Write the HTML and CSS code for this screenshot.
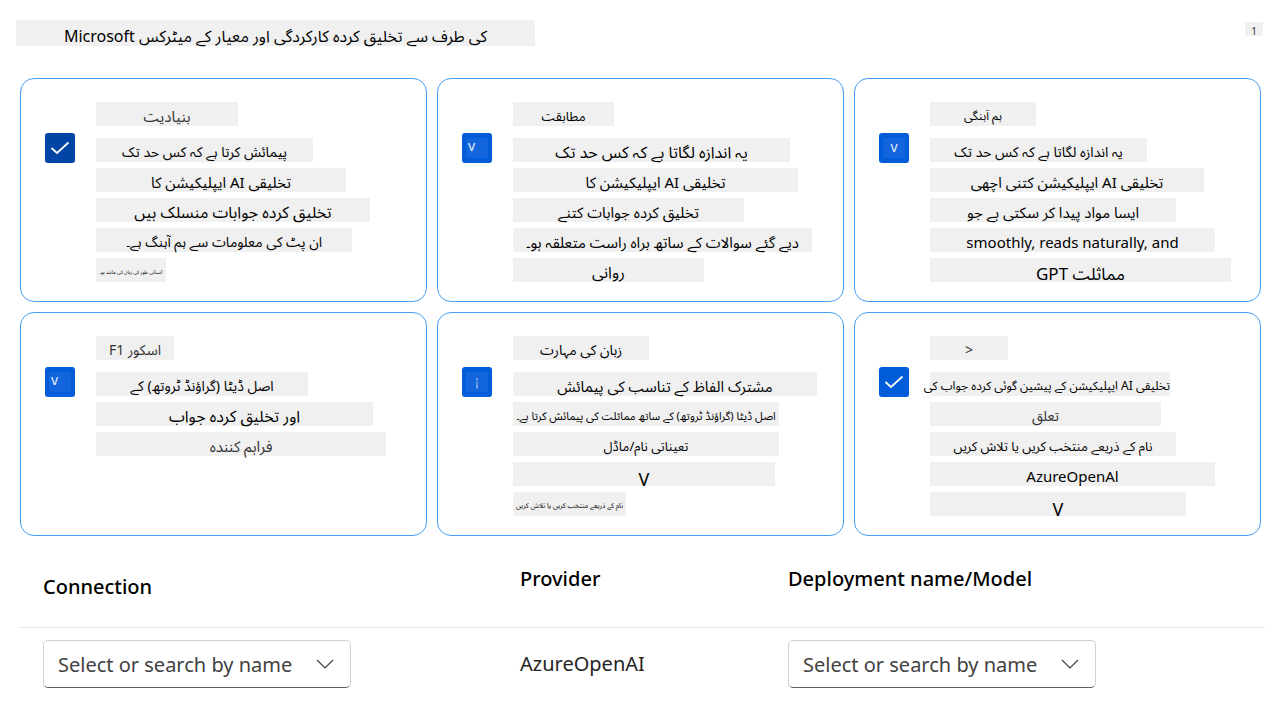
FILE: index.html
```html
<!DOCTYPE html>
<html lang="ur" dir="ltr">
<head>
<meta charset="utf-8">
<title>Microsoft کی طرف سے تخلیق کردہ کارکردگی اور معیار کے میٹرکس</title>
<link rel="stylesheet" href="styles.css">
</head>
<body>
<header class="top">
  <h1 class="strip heading" dir="auto">Microsoft کی طرف سے تخلیق کردہ کارکردگی اور معیار کے میٹرکس</h1>
  <span class="strip page-number">1</span>
</header>

<main>
  <section class="cards">
    <article class="card">
      <div class="tick tick-dark">
        <input type="checkbox" id="m1" checked>
        <svg class="check" viewBox="0 0 30 30"><path d="M6.500 15L12 20L23.500 9.500"/></svg>
      </div>
      <div class="lines">
        <label class="strip title w-142 soft" for="m1" dir="auto">بنیادیت</label>
        <p class="strip w-217 t-14" dir="auto">پیمائش کرتا ہے کہ کس حد تک</p>
        <p class="strip w-250" dir="auto">تخلیقی AI ایپلیکیشن کا</p>
        <p class="strip w-274 t-16" dir="auto">تخلیق کردہ جوابات منسلک ہیں</p>
        <p class="strip w-256 t-14" dir="auto">ان پٹ کی معلومات سے ہم آہنگ ہے۔</p>
        <p class="strip w-70 t-5" dir="auto">انسانی طور کی زبان کی مانند ہو۔</p>
      </div>
    </article>

    <article class="card">
      <div class="tick">
        <input type="checkbox" id="m2" checked>
        <span class="mark mark-left">v</span>
      </div>
      <div class="lines">
        <label class="strip title w-101 t-13" for="m2" dir="auto">مطابقت</label>
        <p class="strip w-277 t-16" dir="auto">یہ اندازہ لگاتا ہے کہ کس حد تک</p>
        <p class="strip w-285" dir="auto">تخلیقی AI ایپلیکیشن کا</p>
        <p class="strip w-231" dir="auto">تخلیق کردہ جوابات کتنے</p>
        <p class="strip w-299" dir="auto">دیے گئے سوالات کے ساتھ براہ راست متعلقہ ہو۔</p>
        <p class="strip w-191 t-16" dir="auto">روانی</p>
      </div>
    </article>

    <article class="card">
      <div class="tick">
        <input type="checkbox" id="m3" checked>
        <span class="mark">v</span>
      </div>
      <div class="lines">
        <label class="strip title w-106 t-12" for="m3" dir="auto">ہم آہنگی</label>
        <p class="strip w-217 t-14" dir="auto">یہ اندازہ لگاتا ہے کہ کس حد تک</p>
        <p class="strip w-274" dir="auto">تخلیقی AI ایپلیکیشن کتنی اچھی</p>
        <p class="strip w-246" dir="auto">ایسا مواد پیدا کر سکتی ہے جو</p>
        <p class="strip w-285" dir="auto">smoothly, reads naturally, and</p>
        <p class="strip w-301 t-17" dir="auto">GPT مماثلت</p>
      </div>
    </article>

    <article class="card">
      <div class="tick">
        <input type="checkbox" id="m4" checked>
        <span class="mark mark-left">v</span>
      </div>
      <div class="lines">
        <label class="strip title w-78 t-14 soft" for="m4" dir="auto">F1 اسکور</label>
        <p class="strip w-212 t-14" dir="auto">اصل ڈیٹا (گراؤنڈ ٹروتھ) کے</p>
        <p class="strip w-277 t-16" dir="auto">اور تخلیق کردہ جواب</p>
        <p class="strip w-290 soft" dir="auto">فراہم کنندہ</p>
      </div>
    </article>

    <article class="card">
      <div class="tick">
        <input type="checkbox" id="m5" checked>
        <span class="mark mark-thin">¡</span>
      </div>
      <div class="lines">
        <label class="strip title w-136 t-14" for="m5" dir="auto">زبان کی مہارت</label>
        <p class="strip w-304" dir="auto">مشترک الفاظ کے تناسب کی پیمائش</p>
        <p class="strip w-266 t-11" dir="auto">اصل ڈیٹا (گراؤنڈ ٹروتھ) کے ساتھ مماثلت کی پیمائش کرتا ہے۔</p>
        <p class="strip w-266 t-13" dir="auto">تعیناتی نام/ماڈل</p>
        <p class="strip w-262 t-18" dir="auto">V</p>
        <p class="strip w-113 t-7" dir="auto">نام کے ذریعے منتخب کریں یا تلاش کریں</p>
      </div>
    </article>

    <article class="card">
      <div class="tick">
        <input type="checkbox" id="m6" checked>
        <svg class="check" viewBox="0 0 30 30"><path d="M6.500 15L12 20L23.500 9.500"/></svg>
      </div>
      <div class="lines">
        <label class="strip title w-78 t-14 soft" for="m6" dir="auto">&gt;</label>
        <p class="strip w-240 t-12" dir="auto">تخلیقی AI ایپلیکیشن کے پیشین گوئی کردہ جواب کی</p>
        <p class="strip w-231 t-14 soft" dir="auto">تعلق</p>
        <p class="strip w-246 t-13" dir="auto">نام کے ذریعے منتخب کریں یا تلاش کریں</p>
        <p class="strip w-285" dir="auto">AzureOpenAl</p>
        <p class="strip w-256 t-18" dir="auto">V</p>
      </div>
    </article>
  </section>

  <table class="connections" lang="en">
    <thead>
      <tr><th class="col-connection" scope="col">Connection</th><th class="col-provider" scope="col">Provider</th><th scope="col">Deployment name/Model</th></tr>
    </thead>
    <tbody>
      <tr>
        <td>
          <div class="picker">
            <select aria-label="Connection"><option>Select or search by name</option></select>
            <svg class="chevron" viewBox="0 0 18 10"><path d="M1 1L9 9L17 1"/></svg>
          </div>
        </td>
        <td>AzureOpenAI</td>
        <td>
          <div class="picker">
            <select aria-label="Deployment name/Model"><option>Select or search by name</option></select>
            <svg class="chevron" viewBox="0 0 18 10"><path d="M1 1L9 9L17 1"/></svg>
          </div>
        </td>
      </tr>
    </tbody>
  </table>
</main>
</body>
</html>
```
FILE: styles.css
```css
* { box-sizing: border-box; }

body {
  margin: 0;
  background: #fff;
  color: #000;
  font-family: "Noto Sans", "Noto Sans Arabic", sans-serif;
}

.top {
  display: flex;
  justify-content: space-between;
  align-items: flex-start;
  padding: 20px 25px 0 16px;
}

.strip {
  display: block;
  height: 24px;
  margin: 0;
  background: #f0f0f0;
  font-size: 15px;
  font-weight: 400;
  line-height: 28px;
  text-align: center;
  white-space: nowrap;
}

.heading {
  width: 519px;
  height: 26px;
  font-size: 16px;
  line-height: 32px;
}

.page-number {
  width: 18px;
  height: 14px;
  margin-top: 2px;
  color: #333;
  font-size: 10px;
  line-height: 18px;
}

.cards {
  display: grid;
  grid-template-columns: repeat(3, 1fr);
  gap: 10px;
  padding: 32px 27px 0 20px;
}

.card {
  display: flex;
  gap: 21px;
  min-height: 224px;
  padding: 23px 8px 18px 24px;
  border: 1px solid #479ef5;
  border-radius: 14px;
}

.lines {
  display: flex;
  flex-direction: column;
  gap: 6px;
}

.title { margin-bottom: 6px; }
.soft { color: #333; }

.t-5 { font-size: 5px; }
.t-7 { font-size: 7px; }
.t-11 { font-size: 11px; }
.t-12 { font-size: 12px; }
.t-13 { font-size: 13px; }
.t-14 { font-size: 14px; }
.t-16 { font-size: 16px; }
.t-17 { font-size: 17px; line-height: 32px; }
.t-18 { font-size: 18px; line-height: 34px; }

.w-70 { width: 70px; }
.w-78 { width: 78px; }
.w-101 { width: 101px; }
.w-106 { width: 106px; }
.w-113 { width: 113px; }
.w-136 { width: 136px; }
.w-142 { width: 142px; }
.w-191 { width: 191px; }
.w-212 { width: 212px; }
.w-217 { width: 217px; }
.w-231 { width: 231px; }
.w-240 { width: 240px; }
.w-246 { width: 246px; }
.w-250 { width: 250px; }
.w-256 { width: 256px; }
.w-262 { width: 262px; }
.w-266 { width: 266px; }
.w-274 { width: 274px; }
.w-277 { width: 277px; }
.w-285 { width: 285px; }
.w-290 { width: 290px; }
.w-299 { width: 299px; }
.w-301 { width: 301px; }
.w-304 { width: 304px; }

.tick {
  display: grid;
  flex: none;
  place-items: center;
  width: 30px;
  height: 30px;
  margin-top: 31px;
}

.tick > * { grid-area: 1 / 1; }

.tick input {
  appearance: none;
  width: 30px;
  height: 30px;
  margin: 0;
  border-radius: 3px;
  background: #015cda;
}

.tick-dark input { background: #0045a6; }

.check {
  width: 30px;
  height: 30px;
  fill: none;
  stroke: #fff;
  stroke-width: 1.700;
  pointer-events: none;
}

.mark {
  width: 22px;
  height: 20px;
  background: #1265dc;
  color: #e4eefb;
  font-size: 14px;
  line-height: 18px;
  text-align: center;
  pointer-events: none;
}

.mark-left {
  padding-left: 2px;
  line-height: 16px;
  text-align: left;
}

.mark-thin { color: #9cc0f0; }

.connections {
  width: calc(100% - 42px);
  margin: 0 23px 0 19px;
  border-collapse: collapse;
  table-layout: fixed;
}

.connections th,
.connections td {
  padding: 0;
  text-align: left;
  font-size: 20px;
  line-height: 28px;
}

.connections th {
  height: 91px;
  padding-bottom: 4px;
  border-bottom: 1px solid #e6e6e6;
  font-weight: 500;
}

.connections th:first-child { padding: 12px 0 0 24px; }
.connections td:first-child { padding-left: 24px; }
.connections td { height: 74px; color: #242424; }

.col-connection { width: 501px; }
.col-provider { width: 268px; }

.picker {
  display: grid;
  align-items: center;
  width: 308px;
}

.picker > * { grid-area: 1 / 1; }

.picker select {
  appearance: none;
  width: 100%;
  height: 48px;
  padding: 2px 50px 0 14px;
  border: 1px solid #d1d1d1;
  border-bottom-color: #616161;
  border-radius: 5px;
  background: #fff;
  color: #424242;
  font: inherit;
}

.chevron {
  justify-self: end;
  width: 18px;
  height: 10px;
  margin-right: 17px;
  fill: none;
  stroke: #424242;
  stroke-width: 1.200;
  pointer-events: none;
}
```
